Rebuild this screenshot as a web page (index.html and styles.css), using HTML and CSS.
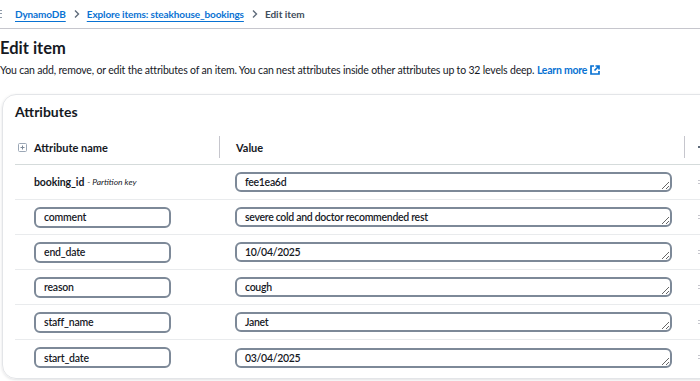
FILE: index.html
```html
<!DOCTYPE html>
<html>
<head>
<meta charset="utf-8">
<link rel="stylesheet" href="styles.css">
</head>
<body>
<nav class="crumbs">
  <span class="menu-edge"></span>
  <a class="crumb-link" href="#">DynamoDB</a>
  <svg class="chev" width="6" height="10" viewBox="0 0 6 10"><path d="M1 1.5 L4.5 5 L1 8.5" fill="none" stroke="#5f6b7a" stroke-width="1.4"/></svg>
  <a class="crumb-link" href="#">Explore items: steakhouse_bookings</a>
  <svg class="chev" width="6" height="10" viewBox="0 0 6 10"><path d="M1 1.5 L4.5 5 L1 8.5" fill="none" stroke="#5f6b7a" stroke-width="1.4"/></svg>
  <span class="crumb-current">Edit item</span>
</nav>
<header class="page-head">
  <h1 class="title">Edit item</h1>
  <p class="desc">You can add, remove, or edit the attributes of an item. You can nest attributes inside other attributes up to 32 levels deep. <a class="learn" href="#">Learn more<svg class="ext" width="10" height="10" viewBox="0 0 10 10"><path d="M4 1H1V9H9V6" fill="none" stroke="#0972d3" stroke-width="1.7"/><path d="M5.5 1H9V4.5M9 1L4.5 5.5" fill="none" stroke="#0972d3" stroke-width="1.7"/></svg></a></p>
</header>
<section class="card">
  <h2 class="card-title">Attributes</h2>
  <div class="table">
    <div class="hcell first"><svg class="expand-icon" width="9" height="9" viewBox="0 0 9 9"><rect x="0.5" y="0.5" width="8" height="8" rx="1" fill="none" stroke="#9ba7b6"/><path d="M4.5 2.5V6.5M2.5 4.5H6.5" stroke="#7d8998" stroke-width="1"/></svg>Attribute name</div>
    <div class="hcell second">Value</div>
    <div class="hcell third"><span class="tick"></span></div>

    <div class="cell name"><span class="key">booking_id</span><span class="pk">- Partition key</span></div>
    <div class="cell val"><textarea class="value" rows="1">fee1ea6d</textarea></div>
    <div class="cell act"><span class="dots"></span></div>

    <div class="cell name"><input class="name-input" value="comment"></div>
    <div class="cell val"><textarea class="value" rows="1">severe cold and doctor recommended rest</textarea></div>
    <div class="cell act"><span class="dots"></span></div>

    <div class="cell name"><input class="name-input" value="end_date"></div>
    <div class="cell val"><textarea class="value" rows="1">10/04/2025</textarea></div>
    <div class="cell act"><span class="dots"></span></div>

    <div class="cell name"><input class="name-input" value="reason"></div>
    <div class="cell val"><textarea class="value" rows="1">cough</textarea></div>
    <div class="cell act"><span class="dots"></span></div>

    <div class="cell name"><input class="name-input" value="staff_name"></div>
    <div class="cell val"><textarea class="value" rows="1">Janet</textarea></div>
    <div class="cell act"><span class="dots"></span></div>

    <div class="cell name last"><input class="name-input" value="start_date"></div>
    <div class="cell val last"><textarea class="value" rows="1">03/04/2025</textarea></div>
    <div class="cell act last"><span class="dots"></span></div>
  </div>
</section>
</body>
</html>
```
FILE: styles.css
```css
* { box-sizing: border-box; }
html, body { margin: 0; padding: 0; background: #ffffff; overflow: hidden; }
body {
  font-family: Lato, "Noto Sans", sans-serif;
  color: #16191f;
  font-size: 10.5px;
  width: 700px;
  height: 381px;
}
.crumbs {
  height: 29px;
  border-bottom: 1px solid #c6c6cd;
  display: flex;
  align-items: center;
  padding: 0 0 1px 15px;
  position: relative;
  font-size: 10px;
  font-weight: 700;
}
.menu-edge {
  position: absolute;
  left: 0;
  top: 10px;
  width: 2px;
  height: 8px;
  background: repeating-linear-gradient(#8d99a8 0 1px, transparent 1px 3.5px);
}
.crumb-link {
  color: #0972d3;
  text-decoration: underline;
  text-underline-offset: 3px;
  letter-spacing: -0.12px;
}
.chev { margin: 0 7px 0 8px; }
.crumb-current { color: #414d5c; }
.title {
  margin: 9px 0 0 0;
  font-size: 16.5px;
  font-weight: 700;
  line-height: 20px;
}
.desc {
  margin: 5px 0 0 0;
  line-height: 14px;
  font-size: 10.5px;
  letter-spacing: -0.18px;
}
.learn { color: #0972d3; text-decoration: none; font-weight: 700; letter-spacing: -0.25px; }
.ext { margin-left: 3px; vertical-align: -1px; }
.card {
  margin: 17px 0 0 2px;
  width: 730px;
  border: 1px solid #e3e5e8;
  border-radius: 14px;
  box-shadow: 0 1px 3px rgba(0, 7, 22, 0.12);
  padding: 8px 0 3px 12px;
}
.card-title {
  margin: 0;
  font-size: 14px;
  font-weight: 700;
  line-height: 18px;
}
.table {
  margin-top: 15px;
  display: grid;
  grid-template-columns: 205px 465px 40px;
}
.hcell {
  height: 29px;
  border-bottom: 1px solid #d5dbdb;
  display: flex;
  align-items: center;
  font-weight: 700;
  font-size: 11px;
  padding-bottom: 6px;
  position: relative;
}
.hcell.first { padding-left: 3px; }
.hcell.second { padding-left: 16px; }
.hcell.first::after, .hcell.second::after {
  content: "";
  position: absolute;
  right: 0;
  top: 0;
  height: 22px;
  width: 1px;
  background: #c6c6cd;
}
.expand-icon { margin-right: 7px; flex: none; }
.tick {
  margin-left: 13px;
  width: 2px;
  height: 2px;
  background: #5f6b7a;
}
.cell {
  height: 35px;
  border-bottom: 1px solid #e9ebed;
  display: flex;
  align-items: center;
}
.cell.last { border-bottom: none; }
.cell.name { padding-left: 19px; }
.cell.val { padding-left: 15px; }
.key { font-size: 10.5px; font-weight: 700; letter-spacing: -0.1px; }
.pk { font-size: 8.5px; font-style: italic; margin-left: 3px; }
.name-input {
  width: 137px;
  height: 21px;
  border: 2px solid #7d8998;
  border-radius: 6px;
  padding: 0 0 0 8px;
  font-family: inherit;
  font-size: 10.5px;
  font-weight: 600;
  letter-spacing: -0.2px;
  color: #16191f;
  outline: none;
}
.value {
  display: block;
  width: 437px;
  height: 20px;
  border: 2px solid #7d8998;
  border-radius: 6px;
  padding: 1px 8px 0 8px;
  font-family: inherit;
  font-size: 10.5px;
  font-weight: 600;
  letter-spacing: -0.3px;
  line-height: 14px;
  color: #16191f;
  resize: vertical;
  overflow: hidden;
  outline: none;
}
.dots {
  margin-left: 13px;
  width: 2px;
  height: 5px;
  background: repeating-linear-gradient(#c6c6cd 0 1px, transparent 1px 3px);
}
```
